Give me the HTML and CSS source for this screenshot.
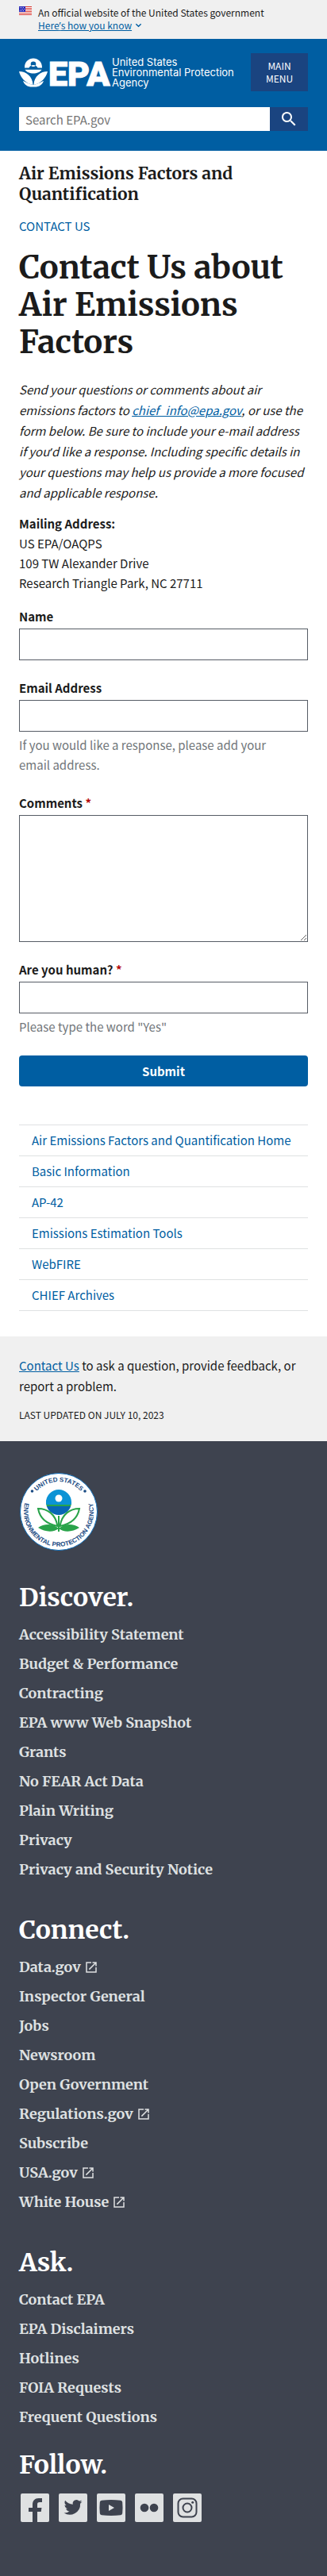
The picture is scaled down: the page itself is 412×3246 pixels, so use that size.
FILE: index.html
```html
<!DOCTYPE html>
<html lang="en">
<head>
<meta charset="utf-8">
<meta name="viewport" content="width=device-width, initial-scale=1">
<title>Contact Us about Air Emissions Factors | US EPA</title>
<link rel="stylesheet" href="styles.css">
</head>
<body>
<svg class="sprite" aria-hidden="true">
  <symbol id="external" viewBox="0 0 24 24"><path d="M19 19H5V5h7V3H3v18h18v-9h-2zM14 3v2h3.6l-9.8 9.8 1.4 1.4L19 6.4V10h2V3z"/></symbol>
</svg>
<section class="banner" aria-label="Official government website">
  <svg class="flag" viewBox="0 0 16 11" aria-hidden="true">
    <path fill="#fff" d="M0 0h16v11H0z"/>
    <path fill="#d83933" d="M0 0h16v1H0zM0 2h16v1H0zM0 4h16v1H0zM0 6h16v1H0zM0 8h16v1H0zM0 10h16v1H0z"/>
    <path fill="#2a2ab8" d="M0 0h8v7H0z"/>
    <path stroke="#fff" stroke-dasharray="1 1" stroke-width=".7" d="M1 1.5h6M2 3.5h5M1 5.5h6"/>
  </svg>
  <div>
    <p class="banner-text">An official website of the United States government</p>
    <a class="banner-link" href="#"><span>Here<span class="quote">’</span>s how you know</span>
      <svg viewBox="0 0 10 6" aria-hidden="true"><path fill="none" stroke="currentColor" stroke-width="1.6" d="M1.5 1 5 4.300 8.500 1"/></svg></a>
  </div>
</section>
<header class="header">
  <div class="header-row">
    <a class="logo" href="#" aria-label="US EPA home">
      <svg class="logo-mark" viewBox="0 0 116 37" aria-hidden="true">
        <g fill="#fff">
          <path fill-rule="evenodd" d="M7 12.500C6.500-3.600 29.500-3.600 29 12.500h-5.500a6 6 0 0 0-11 0zM18 4.500a3.300 3.300 0 1 0 0 6.600 3.300 3.300 0 0 0 0-6.600z"/>
          <path d="M7.500 14.700h21C25 21 11 21 7.500 14.700z"/>
          <path d="M0 17c9 0 17 6 17.500 17C8 32 2 25 0 17zM36 17c-9 0-17 6-17.500 17C28 32 34 25 36 17z"/>
          <path d="M5 29c4 1.500 7 4 13 5 6-1 9-3.500 13-5-2 5-6 8-13 7.500C11 37 7 34 5 29z"/>
        </g>
        <text class="logo-epa" x="37" y="35">EPA</text>
      </svg>
      <span class="logo-name">United States<br>Environmental Protection<br>Agency</span>
    </a>
    <button class="menu-button" type="button">MAIN<br>MENU</button>
  </div>
  <form class="search" role="search">
    <input type="search" aria-label="Search EPA.gov" placeholder="Search EPA.gov">
    <button type="button" aria-label="Search"><svg viewBox="0 0 24 24" aria-hidden="true"><path fill="#fff" d="M15.500 14h-.8l-.3-.3a6.500 6.500 0 1 0-.7.7l.3.300v.8l5 5 1.500-1.500zm-6 0a4.500 4.500 0 1 1 0-9 4.500 4.500 0 0 1 0 9z"/></svg></button>
  </form>
</header>
<main class="main">
  <h2 class="site-title">Air Emissions Factors and Quantification</h2>
  <a class="section-link" href="#">CONTACT US</a>
  <h1 class="page-title">Contact Us about Air Emissions Factors</h1>
  <p class="intro">Send your questions or comments about air emissions factors to <a href="#">chief_info@epa.gov</a>, or use the form below. Be sure to include your e-mail address if you<span class="quote">’</span>d like a response. Including specific details in your questions may help us provide a more focused and applicable response.</p>
  <p class="address"><strong>Mailing Address:</strong><br>US EPA/OAQPS<br>109 TW Alexander Drive<br>Research Triangle Park, NC 27711</p>
  <form class="form">
    <div class="field"><label for="name">Name</label><input id="name" type="text"></div>
    <div class="field"><label for="email">Email Address</label><input id="email" type="email" aria-describedby="email-help"><p class="help" id="email-help">If you would like a response, please add your email address.</p></div>
    <div class="field"><label for="comments">Comments <span class="required">*</span></label><textarea id="comments"></textarea></div>
    <div class="field"><label for="human">Are you human? <span class="required">*</span></label><input id="human" type="text" aria-describedby="human-help"><p class="help" id="human-help">Please type the word "Yes"</p></div>
    <button class="submit" type="button">Submit</button>
  </form>
  <nav aria-label="Section">
    <ul class="side-nav">
      <li><a href="#">Air Emissions Factors and Quantification Home</a></li>
      <li><a href="#">Basic Information</a></li>
      <li><a href="#">AP-42</a></li>
      <li><a href="#">Emissions Estimation Tools</a></li>
      <li><a href="#">WebFIRE</a></li>
      <li><a href="#">CHIEF Archives</a></li>
    </ul>
  </nav>
</main>
<section class="feedback">
  <p><a href="#">Contact Us</a> to ask a question, provide feedback, or report a problem.</p>
  <p class="updated">LAST UPDATED ON JULY 10, 2023</p>
</section>
<footer class="footer">
  <svg class="seal" viewBox="0 0 100 100" role="img" aria-label="EPA seal">
    <defs>
      <path id="arc-top" d="M12 50a38 38 0 0 1 76 0"/>
      <path id="arc-bottom" d="M13 26A44 44 0 1 0 87 26"/>
      <clipPath id="bloom"><circle cx="50" cy="38" r="16"/></clipPath>
    </defs>
    <circle cx="50" cy="50" r="48.500" fill="#fff" stroke="#0a69b5"/>
    <g class="seal-text">
      <text text-anchor="middle"><textPath href="#arc-top" startOffset="50%">UNITED STATES</textPath></text>
      <text text-anchor="middle"><textPath href="#arc-bottom" startOffset="50%">ENVIRONMENTAL PROTECTION AGENCY</textPath></text>
    </g>
    <circle cx="16.500" cy="24" r="1.800" fill="#194a83"/><circle cx="83" cy="24" r="1.800" fill="#194a83"/>
    <g clip-path="url(#bloom)">
      <path fill="#0b93d5" d="M34 22h32v17H34z"/><path fill="#29a34a" d="M34 38h32v5H34z"/><path fill="#0866b5" d="M34 43h32v12H34z"/>
      <path fill="#0b93d5" d="M34 35q8 4 16 2t16 1v3H34z"/>
    </g>
    <circle cx="50" cy="33" r="4.500" fill="#fff"/>
    <g fill="none" stroke="#29a34a" stroke-width="2"><path d="M50 55v20M48.500 68C33 65 26 57 24 46c12 0 22 7 24.500 22zM51.500 68C67 65 74 57 76 46c-12 0-22 7-24.500 22z"/></g>
    <path fill="#29a34a" d="M24 70c7-5 18-6 26 1-6 5-17 5-26-1zM76 70c-7-5-18-6-26 1 6 5 17 5 26-1z"/>
  </svg>
  <section class="footer-group">
    <h2>Discover.</h2>
    <ul>
      <li><a href="#">Accessibility Statement</a></li>
      <li><a href="#">Budget &amp; Performance</a></li>
      <li><a href="#">Contracting</a></li>
      <li><a href="#">EPA www Web Snapshot</a></li>
      <li><a href="#">Grants</a></li>
      <li><a href="#">No FEAR Act Data</a></li>
      <li><a href="#">Plain Writing</a></li>
      <li><a href="#">Privacy</a></li>
      <li><a href="#">Privacy and Security Notice</a></li>
    </ul>
  </section>
  <section class="footer-group">
    <h2>Connect.</h2>
    <ul>
      <li><a href="#">Data.gov <svg><use href="#external"/></svg></a></li>
      <li><a href="#">Inspector General</a></li>
      <li><a href="#">Jobs</a></li>
      <li><a href="#">Newsroom</a></li>
      <li><a href="#">Open Government</a></li>
      <li><a href="#">Regulations.gov <svg><use href="#external"/></svg></a></li>
      <li><a href="#">Subscribe</a></li>
      <li><a href="#">USA.gov <svg><use href="#external"/></svg></a></li>
      <li><a href="#">White House <svg><use href="#external"/></svg></a></li>
    </ul>
  </section>
  <section class="footer-group">
    <h2>Ask.</h2>
    <ul>
      <li><a href="#">Contact EPA</a></li>
      <li><a href="#">EPA Disclaimers</a></li>
      <li><a href="#">Hotlines</a></li>
      <li><a href="#">FOIA Requests</a></li>
      <li><a href="#">Frequent Questions</a></li>
    </ul>
  </section>
  <section class="follow">
    <h2>Follow.</h2>
    <div class="social">
      <a href="#" aria-label="Facebook"><svg viewBox="0 0 36 36"><rect width="36" height="36" rx="2"/><path class="cut" d="M15 36V23h-5v-5h5v-4c0-5 3-8 7.500-8H27v5h-3c-2.500 0-3 1-3 3v4h5.500l-.8 5H21v13z"/></svg></a>
      <a href="#" aria-label="Twitter"><svg viewBox="0 0 36 36"><rect width="36" height="36" rx="2"/><path class="cut" d="M29.500 10.200c-.8.400-1.700.6-2.700.8 1-.6 1.700-1.500 2-2.600-.9.500-1.900.9-3 1.100a4.700 4.700 0 0 0-8 4.300c-4-.2-7.400-2.100-9.700-5-1.300 2.100-.6 4.900 1.500 6.300-.8 0-1.500-.2-2.100-.6 0 2.200 1.500 4.200 3.700 4.700-.7.200-1.400.2-2.100.1.600 1.900 2.300 3.200 4.400 3.300a9.500 9.500 0 0 1-7 1.900A13.300 13.300 0 0 0 27.100 12.700c1-.7 1.800-1.500 2.400-2.500z"/></svg></a>
      <a href="#" aria-label="YouTube"><svg viewBox="0 0 36 36"><rect width="36" height="36" rx="2"/><path class="cut" d="M6 8.700q12-1.400 24 0 2 .3 2.200 2.300.7 7 0 14-.2 2-2.200 2.300-12 1.400-24 0-2-.3-2.200-2.300-.7-7 0-14Q4 9 6 8.700z"/><path d="m15 14 7 4-7 4z"/></svg></a>
      <a href="#" aria-label="Flickr"><svg viewBox="0 0 36 36"><rect width="36" height="36" rx="2"/><circle class="cut" cx="12" cy="18" r="5.300"/><circle class="cut" cx="24" cy="18" r="5.300"/></svg></a>
      <a href="#" aria-label="Instagram"><svg viewBox="0 0 36 36"><rect width="36" height="36" rx="2"/><rect class="line" x="6.500" y="6.500" width="23" height="23" rx="6"/><circle class="line" cx="18" cy="18" r="5.500"/><circle class="cut" cx="24.700" cy="11.300" r="1.500"/></svg></a>
    </div>
  </section>
</footer>
</body>
</html>
```
FILE: styles.css
```css
:root {
  --sans: "Source Sans Pro", "Noto Sans CJK SC", "Noto Sans", sans-serif;
  --serif: "Merriweather", "DejaVu Serif Condensed", "DejaVu Serif", serif;
  --blue: #005ea2;
  --navy: #1a4480;
  --slate: #3e434f;
}
* { box-sizing: border-box; }
body { margin: 0; font: 15px/25px var(--sans); color: #1b1b1b; background: #fff; }
p, h1, h2, ul { margin: 0; padding: 0; }
ul { list-style: none; }
a { color: var(--blue); }
button, input, textarea { font: inherit; border-radius: 0; }
.sprite { display: none; }
.quote { font-family: "Noto Sans", sans-serif; line-height: 1; }

.banner { display: flex; gap: 8px; padding: 8px 24px 9px; background: #f0f0f0; font-size: 12px; line-height: 16px; }
.flag { flex: none; width: 16px; height: 11px; }
.banner-link { display: flex; align-items: center; gap: 4px; text-decoration: none; }
.banner-link > span { text-decoration: underline; }
.banner-link svg { width: 9px; height: 6px; }

.header { padding: 18px 24px 25px; background: var(--blue); }
.header-row { display: flex; justify-content: space-between; align-items: center; }
.logo { display: flex; align-items: center; gap: 1px; color: #fff; text-decoration: none; }
.logo-mark { flex: none; width: 116px; height: 37px; }
.logo-epa { font: 900 43px Roboto, sans-serif; fill: #fff; stroke: #fff; stroke-width: 1px; }
.logo-name { font: 13px/13px Inter, sans-serif; white-space: nowrap; }
.menu-button { width: 72px; height: 48px; padding: 0; border: 0; background: var(--navy); color: #fff; font-size: 12px; line-height: 16px; }
.search { display: flex; height: 30px; margin-top: 20px; }
.search input { flex: 1; min-width: 0; padding: 0 8px; border: 0; background: #fff; color: #1b1b1b; appearance: none; }
.search input::placeholder { color: #757575; opacity: 1; }
.search button { display: grid; place-items: center; width: 48px; padding: 0; border: 0; background: var(--navy); }
.search svg { width: 24px; height: 24px; }

.main { padding: 16px 24px 32px; }
.site-title { font: bold 21px/26px var(--serif); }
.section-link { display: block; margin-top: 15px; line-height: 24px; text-decoration: none; }
.page-title { margin-top: 17px; font: bold 40px/47px var(--serif); }
.intro { margin-top: 23px; font-style: italic; line-height: 26px; }
.address { margin-top: 13px; }
.form { display: flex; flex-direction: column; gap: 23px; margin-top: 18px; }
.field { display: flex; flex-direction: column; }
.field label { margin-bottom: 3px; font-weight: bold; line-height: 24px; }
.field input, .field textarea { width: 100%; height: 40px; padding: 8px; border: 1px solid #565c65; background: #fff; }
.field textarea { height: 160px; resize: vertical; }
.required { color: #b50909; }
.help { margin: 4px 0 1px; padding-right: 24px; color: #71767a; }
.submit { height: 39px; border: 0; border-radius: 4px; background: var(--blue); color: #fff; font-weight: bold; line-height: 16px; }
.side-nav { margin-top: 48px; border-bottom: 1px solid #dfe1e2; }
.side-nav a { display: block; padding: 6px 16px 7px; border-top: 1px solid #dfe1e2; text-decoration: none; }

.feedback { padding: 24px 24px 23px; background: #f0f0f0; line-height: 26px; }
.updated { margin-top: 13px; font-size: 12px; line-height: 20px; }

.footer { padding: 39px 24px 68px; background: var(--slate); color: #fff; }
.seal { display: block; width: 100px; height: 100px; }
.seal-text { font: bold 8px "Liberation Sans", sans-serif; fill: #194a83; }
.footer h2 { margin-bottom: 8px; font: bold 32px/40px var(--serif); }
.footer-group { padding-top: 38px; }
.footer-group:last-of-type { padding-top: 37px; }
.footer-group a { display: flex; align-items: center; gap: 4px; color: #dfe1e2; font: bold 18px/37px var(--serif); text-decoration: none; }
.footer-group svg { width: 18px; height: 18px; fill: currentColor; }
.follow { padding-top: 22px; }
.social { display: flex; gap: 12px; padding: 8px 2px 0; }
.social a, .social svg { display: block; width: 36px; height: 36px; }
.social svg { fill: #dfe1e2; }
.social .cut { fill: var(--slate); }
.social .line { fill: none; stroke: var(--slate); stroke-width: 2px; }
```
